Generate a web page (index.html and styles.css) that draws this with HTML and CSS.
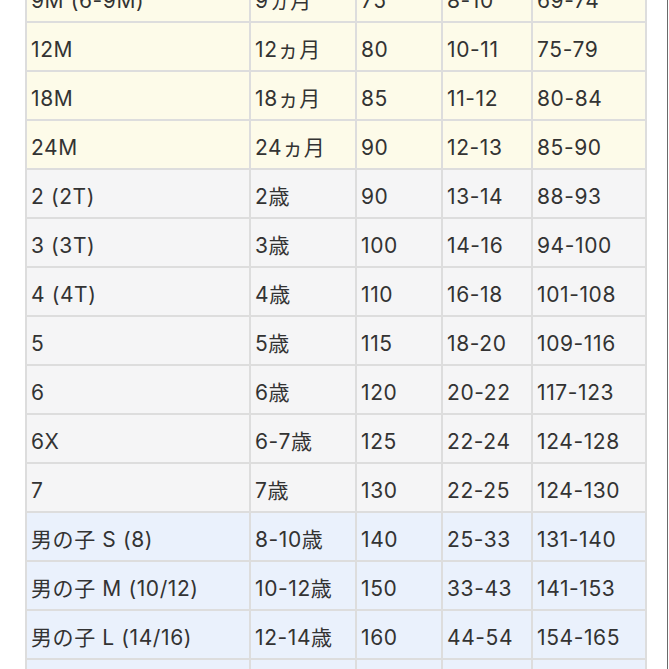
FILE: index.html
```html
<!DOCTYPE html>
<html lang="ja">
<head>
<meta charset="utf-8">
<link rel="stylesheet" href="styles.css">
</head>
<body>
<div class="page">
<table class="size-table">
<colgroup>
<col class="c1"><col class="c2"><col class="c3"><col class="c4"><col class="c5">
</colgroup>
<tbody>
<tr class="baby"><td>9M (6-9M)</td><td>9ヵ月</td><td>75</td><td>8-10</td><td>69-74</td></tr>
<tr class="baby"><td>12M</td><td>12ヵ月</td><td>80</td><td>10-11</td><td>75-79</td></tr>
<tr class="baby"><td>18M</td><td>18ヵ月</td><td>85</td><td>11-12</td><td>80-84</td></tr>
<tr class="baby"><td>24M</td><td>24ヵ月</td><td>90</td><td>12-13</td><td>85-90</td></tr>
<tr class="kid"><td>2 (2T)</td><td>2歳</td><td>90</td><td>13-14</td><td>88-93</td></tr>
<tr class="kid"><td>3 (3T)</td><td>3歳</td><td>100</td><td>14-16</td><td>94-100</td></tr>
<tr class="kid"><td>4 (4T)</td><td>4歳</td><td>110</td><td>16-18</td><td>101-108</td></tr>
<tr class="kid"><td>5</td><td>5歳</td><td>115</td><td>18-20</td><td>109-116</td></tr>
<tr class="kid"><td>6</td><td>6歳</td><td>120</td><td>20-22</td><td>117-123</td></tr>
<tr class="kid"><td>6X</td><td>6-7歳</td><td>125</td><td>22-24</td><td>124-128</td></tr>
<tr class="kid"><td>7</td><td>7歳</td><td>130</td><td>22-25</td><td>124-130</td></tr>
<tr class="boy"><td>男の子 S (8)</td><td>8-10歳</td><td>140</td><td>25-33</td><td>131-140</td></tr>
<tr class="boy"><td>男の子 M (10/12)</td><td>10-12歳</td><td>150</td><td>33-43</td><td>141-153</td></tr>
<tr class="boy"><td>男の子 L (14/16)</td><td>12-14歳</td><td>160</td><td>44-54</td><td>154-165</td></tr>
<tr class="boy"><td>男の子 XL (18/20)</td><td>14-16歳</td><td>170</td><td>55-66</td><td>166-176</td></tr>
</tbody>
</table>
</div>
</body>
</html>
```

FILE: styles.css
```css
html, body {
  margin: 0;
  padding: 0;
  background: #ffffff;
}
.page {
  width: 668px;
  height: 669px;
  overflow: hidden;
  border-right: 1px solid #6a6a6a;
  padding-left: 25px;
  box-sizing: border-box;
}
.size-table {
  margin-top: -28px;
  border-collapse: collapse;
  table-layout: fixed;
  width: 622px;
  font-family: "Inter", "Liberation Sans", "Noto Sans CJK JP", sans-serif;
  font-size: 21px;
  letter-spacing: 0.6px;
  color: #333333;
}
.c1 { width: 224px; }
.c2 { width: 106px; }
.c3 { width: 86px; }
.c4 { width: 90px; }
.c5 { width: 114px; }
.size-table td {
  height: 42px;
  padding: 5px 2px 0 4px;
  box-sizing: content-box;
  border: 2px solid #dddddd;
  vertical-align: middle;
  white-space: nowrap;
  overflow: hidden;
  line-height: 1;
}
.baby td { background: #fdfbe9; }
.kid td { background: #f5f5f6; }
.boy td { background: #eaf1fc; }
```
